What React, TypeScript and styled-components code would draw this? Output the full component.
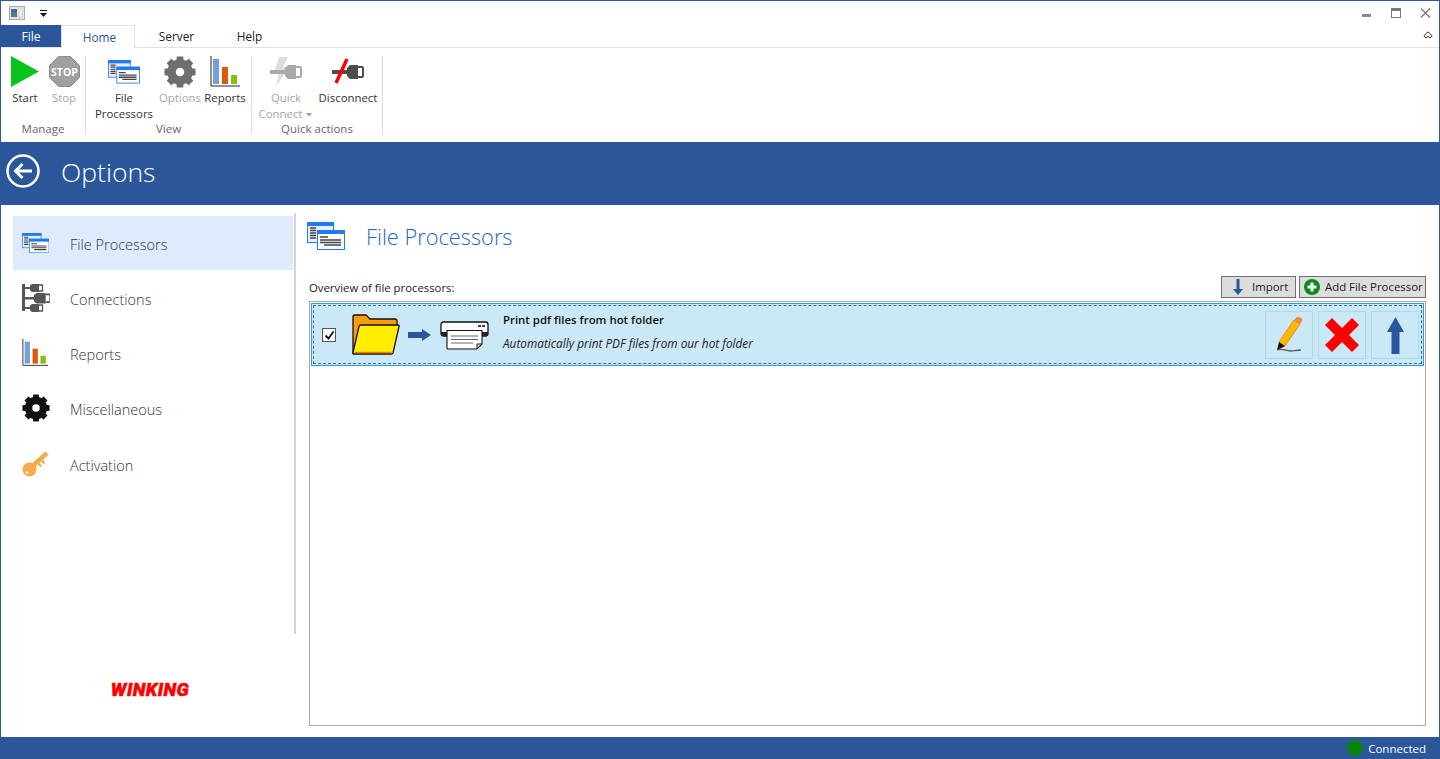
import React from "react";
import styled, { createGlobalStyle } from "styled-components";

const Global = createGlobalStyle`
  html, body { margin: 0; padding: 0; background: #fff; }
  * { box-sizing: border-box; }
  #root { width: 1440px; height: 759px; overflow: hidden; }
`;

const BLUE = "#2b579a";

const Win = styled.div`
  width: 1440px; height: 759px; display: flex; flex-direction: column;
  border: 1px solid ${BLUE}; border-bottom: 0; background: #fff;
  font-family: "Open Sans", "Noto Sans", sans-serif; color: #222; overflow: hidden;
`;
const TitleBar = styled.div`
  height: 24px; display: flex; align-items: center; padding-left: 8px; flex: none;
`;
const AppIcon = styled.div`margin-right: 14px; display: flex;`;
const WinButtons = styled.div`margin-left: auto; display: flex; align-items: center; gap: 19px; padding-right: 8px;`;
const TabRow = styled.div`
  height: 23px; display: flex; align-items: stretch; flex: none; border-bottom: 1px solid #e1e1e1; position: relative;
`;
const FileTab = styled.div`
  width: 60px; background: ${BLUE}; color: #fff; font-size: 12px; display: flex; align-items: center; justify-content: center;
`;
const Tab = styled.div<{ $active?: boolean; $w: number }>`
  width: ${p => p.$w}px; font-size: 11.8px; display: flex; align-items: center; justify-content: center;
  color: ${p => (p.$active ? BLUE : "#222")};
  ${p => p.$active ? `background:#fff;border:1px solid #e1e1e1;border-bottom:0;height:23px;margin-bottom:-1px;padding-left:3px;` : ""}
`;
const Collapse = styled.div`position: absolute; right: 6px; top: 6px; display: flex;`;
const Ribbon = styled.div`height: 94px; display: flex; flex: none; padding-top: 8px;`;
const Group = styled.div<{ $w: number }>`
  width: ${p => p.$w}px; height: 78px; border-right: 1px solid #dcdcdc; display: flex; flex-direction: column; position: relative; flex: none;
`;
const GroupItems = styled.div`display: flex; flex: 1; align-items: flex-start;`;
const GroupLabel = styled.div`
  height: 14px; font-size: 11.5px; line-height: 14px; text-align: center; color: #666; position: absolute; left: 0; right: 0; bottom: -2px;
`;
const Item = styled.div<{ $w: number; $off?: boolean; $ml?: number }>`
  width: ${p => p.$w}px; margin-left: ${p => p.$ml ?? 0}px; display: flex; flex-direction: column; align-items: center; flex: none;
  font-size: 11.4px; line-height: 16px; text-align: center; color: ${p => (p.$off ? "#a6a6a6" : "#333")};
`;
const ItemIcon = styled.div<{ $pt?: number }>`
  height: 33px; padding-top: ${p => p.$pt ?? 0}px; display: flex; align-items: flex-start; justify-content: center; margin-bottom: 1px;
`;
const ItemText = styled.span`white-space: nowrap;`;
const Caret = styled.svg`vertical-align: 1px; margin-left: 4px;`;

const Band = styled.div`
  height: 63px; background: ${BLUE}; display: flex; align-items: center; flex: none; margin: 0 -1px; padding: 0 0 6px 6px; color: #fff;
`;
const BandTitle = styled.div`font-size: 26.5px; font-weight: 300; margin-left: 21px; margin-top: 3px;`;

const Body = styled.div`flex: 1; display: flex; min-height: 0;`;
const Side = styled.div`
  width: 295px; flex: none; display: flex; flex-direction: column; padding: 11px 0 0 12px;
`;
const Nav = styled.div`
  height: 421px; display: flex; flex-direction: column; border-right: 2px solid #d4d4d4; margin-top: -3px; padding-top: 3px; width: 283px; flex: none;
`;
const NavItem = styled.div<{ $sel?: boolean }>`
  width: 280px; height: 54px; margin-bottom: 1px; display: flex; align-items: center; padding-left: 9px; flex: none;
  background: ${p => (p.$sel ? "#deebfd" : "transparent")}; font-size: 14.5px; font-weight: 300; color: #333;
  &:last-child { margin-top: 1px; }
`;
const NavIcon = styled.div`width: 48px; display: flex; justify-content: flex-start; flex: none;`;
const NavLabel = styled.span`margin-top: 2px;`;
const Logo = styled.div`
  margin-top: 46px; align-self: center; margin-right: 8px; color: #f00; font: italic 900 18px/20px Roboto, "Liberation Sans", sans-serif;
  letter-spacing: 0.4px; transform: scaleX(1.03); -webkit-text-stroke: 0.5px #f00;
`;

const Main = styled.div`flex: 1; display: flex; flex-direction: column; padding: 0 13px 11px 13px; min-width: 0;`;
const MainHead = styled.div`height: 61px; display: flex; align-items: center; flex: none; margin-left: -2px; padding-top: 1px;`;
const MainTitle = styled.div`font-size: 21.8px; font-weight: 300; color: #1f66c4; margin-left: 21px;`;
const ToolRow = styled.div`height: 23px; margin-top: 9px; display: flex; align-items: center; flex: none;`;
const Overview = styled.div`font-size: 11.35px; color: #222; margin: 1px auto 0 0; white-space: nowrap;`;
const ToolButton = styled.div<{ $w: number; $ml: number }>`
  width: ${p => p.$w}px; height: 22px; margin-left: ${p => p.$ml}px; background: #dddddd; border: 1px solid #707070; white-space: nowrap;
  display: flex; align-items: center; gap: 5px; font-size: 11.4px; padding-left: 4px; color: #222; flex: none;
`;
const ImportIcon = styled.svg`margin: 0 4px 0 7px; flex: none;`;
const ListBox = styled.div`
  flex: 1; margin-top: 3px; border: 1px solid #ababab; padding: 1px;
`;
const Row = styled.div`
  height: 63px; background: #cbe8f6; border: 1px solid #26a0da; padding: 1px;
`;
const RowInner = styled.div`
  height: 100%; border: 1px dashed #3a6f8a; display: flex; align-items: flex-start; padding-left: 8px;
`;
const Check = styled.div`
  width: 14px; height: 14px; background: #fff; border: 1px solid #555; margin-top: 22px; display: flex; align-items: center; justify-content: center; flex: none;
`;
const RowFlow = styled.div`display: flex; align-items: center; margin-left: 16px; margin-top: 8px; flex: none;`;
const ArrowIcon = styled.svg`margin-left: 8px;`;
const PrinterIcon = styled.svg`margin-left: 9px;`;
const RowText = styled.div`margin-left: 14px; padding-top: 5px; flex: none;`;
const RowName = styled.div`font-size: 11.4px; font-weight: 600; line-height: 17px; color: #111;`;
const RowDesc = styled.div`font-size: 11.8px; font-style: italic; line-height: 17px; margin-top: 7px; color: #222;`;
const RowActions = styled.div`margin-left: auto; display: flex; gap: 5px; padding: 5px 2px 0 0;`;
const ActionBtn = styled.div`
  width: 48px; height: 48px; border: 1px solid #aadbe8; display: flex; align-items: center; justify-content: center;
`;
const Status = styled.div`
  height: 22px; background: ${BLUE}; flex: none; margin: 0 -1px; display: flex; align-items: center; justify-content: flex-end; padding-right: 14px; color: #fff; font-size: 11.5px;
`;
const Dot = styled.div`width: 16px; height: 16px; border-radius: 50%; background: #0a830a; margin-right: 5px;`;

const FileProcIcon = ({ s = 1 }: { s?: number }) => (
  <svg width={38 * s} height={28 * s} viewBox="0 0 38 28">
    <rect x="0.5" y="0.5" width="26" height="20" fill="#e9eefa" stroke="#1e7cf0" />
    <rect x="0" y="0" width="27" height="4" fill="#1e7cf0" />
    <path d="M3 6h6M3 8.500h6M3 11h6M3 13.500h6M3 16h6" stroke="#444" strokeWidth="1.4" />
    <rect x="10.5" y="8.500" width="27" height="19" fill="#fff" stroke="#1e7cf0" />
    <rect x="10" y="8" width="28" height="4" fill="#1e7cf0" />
    <path d="M13 15h8M13 18h21M13 20.500h21M17 23h17" stroke="#444" strokeWidth="1.6" />
  </svg>
);
const BarsIcon = ({ s = 1 }: { s?: number }) => (
  <svg width={30 * s} height={31 * s} viewBox="0 0 30 31">
    <path d="M1 0v30h29" fill="none" stroke="#222" strokeWidth="1" />
    <rect x="3" y="3" width="6" height="25" fill="#74a0dc" />
    <rect x="12" y="11" width="6" height="17" fill="#dd5a0a" />
    <rect x="21" y="19" width="6" height="9" fill="#87bd17" />
  </svg>
);
const Gear = ({ size, color }: { size: number; color: string }) => {
  const teeth = Array.from({ length: 8 }, (_, i) => i * 45);
  return (
    <svg width={size} height={size} viewBox="0 0 32 32">
      {teeth.map(a => <path key={a} d="M12 8L12.800 0.500h6.400L20 8z" fill={color} transform={`rotate(${a} 16 16)`} />)}
      <circle cx="16" cy="16" r="8.500" fill="none" stroke={color} strokeWidth="8.500" />
    </svg>
  );
};
const Plug = ({ color }: { color: string }) => (
  <g>
    <rect x="0" y="14" width="17" height="4" fill={color} />
    <path d="M15 12l3-3h8v14h-8l-3-3z" fill={color} />
    <path d="M26 11h4a1 1 0 0 1 1 1v8a1 1 0 0 1-1 1h-4" fill="none" stroke={color} strokeWidth="2" />
  </g>
);
const MiniPlug = ({ y, x, s }: { y: number; x: number; s: number }) => (
  <g transform={`translate(${x} ${y}) scale(${s})`} fill="#555">
    <path d="M0 1.500L2 0h7v8H2L0 6.500z" />
    <path d="M9 1h3.500v6H9" fill="none" stroke="#555" strokeWidth="1.300" />
  </g>
);
const ConnectionsIcon = () => (
  <svg width="28" height="28" viewBox="0 0 28 28">
    <rect x="0" y="0" width="3" height="27" fill="#555" />
    <rect x="0" y="3" width="9" height="2" fill="#555" />
    <rect x="0" y="13" width="13" height="2.500" fill="#555" />
    <rect x="0" y="23" width="9" height="2" fill="#555" />
    <MiniPlug x={8} y={0} s={1} />
    <MiniPlug x={12} y={9} s={1.300} />
    <MiniPlug x={8} y={20} s={1} />
  </svg>
);

export default function App() {
  return (
    <Win>
      <Global />
      <TitleBar>
        <AppIcon>
          <svg width="16" height="14" viewBox="0 0 16 14">
            <rect x="0.500" y="0.500" width="15" height="13" fill="#e4e4e4" stroke="#aaa" />
            <rect x="2" y="3" width="6" height="8" fill="#4e7f7a" />
            <rect x="2" y="3" width="6" height="3" fill="#3d6aa5" />
            <rect x="10" y="3" width="3" height="8" fill="#f4f4f4" stroke="#bbb" strokeWidth="0.500" />
          </svg>
        </AppIcon>
        <svg width="10" height="9" viewBox="0 0 10 9">
          <rect x="1" y="1" width="7" height="1" fill="#111" />
          <path d="M1 4h7L4.500 8z" fill="#111" />
        </svg>
        <WinButtons>
          <svg width="10" height="10" viewBox="0 0 10 10"><rect x="0" y="6" width="9" height="3" fill="#8a8a8a" /></svg>
          <svg width="10" height="10" viewBox="0 0 10 10"><rect x="0.500" y="0.500" width="9" height="9" fill="none" stroke="#777" /><rect x="0" y="0" width="10" height="3" fill="#777" /></svg>
          <svg width="11" height="10" viewBox="0 0 11 10"><path d="M1 0.500l9 9M10 0.500l-9 9" stroke="#777" strokeWidth="1.300" /></svg>
        </WinButtons>
      </TitleBar>
      <TabRow>
        <FileTab>File</FileTab>
        <Tab $active $w={74}>Home</Tab>
        <Tab $w={83}>Server</Tab>
        <Tab $w={63}>Help</Tab>
        <Collapse>
          <svg width="10" height="8" viewBox="0 0 10 8"><path d="M0.800 4.800L5 0.800l4.200 4L7 7 5 5.300 3 7z" fill="none" stroke="#333" strokeWidth="1" /></svg>
        </Collapse>
      </TabRow>
      <Ribbon>
        <Group $w={85}>
          <GroupItems>
            <Item $w={44} $ml={2}>
              <ItemIcon><svg width="28" height="31" viewBox="0 0 28 31"><path d="M0 0l28 15.500L0 31z" fill="#0ac41e" /></svg></ItemIcon>
              Start
            </Item>
            <Item $w={34} $off>
              <ItemIcon>
                <svg width="31" height="31" viewBox="0 0 31 31">
                  <path d="M9.500 0.500h12l9 9v12l-9 9h-12l-9-9v-12z" fill="#a0a0a0" stroke="#8e8e8e" />
                  <text x="15.500" y="19.500" fontSize="10.500" fontWeight="700" fill="#fff" textAnchor="middle" fontFamily="Open Sans">STOP</text>
                </svg>
              </ItemIcon>
              Stop
            </Item>
          </GroupItems>
          <GroupLabel>Manage</GroupLabel>
        </Group>
        <Group $w={166}>
          <GroupItems>
            <Item $w={62} $ml={7}>
              <ItemIcon $pt={4}><FileProcIcon s={0.84} /></ItemIcon>
              <ItemText>File<br />Processors</ItemText>
            </Item>
            <Item $w={48} $off $ml={1}>
              <ItemIcon><Gear size={32} color="#6e6e6e" /></ItemIcon>
              Options
            </Item>
            <Item $w={42}>
              <ItemIcon><BarsIcon /></ItemIcon>
              Reports
            </Item>
          </GroupItems>
          <GroupLabel>View</GroupLabel>
        </Group>
        <Group $w={131}>
          <GroupItems>
            <Item $w={56} $off $ml={6}>
              <ItemIcon>
                <svg width="32" height="32" viewBox="0 0 32 32">
                  <path d="M9 1h9l-5 10h6L6 31l3-14H4z" fill="#dcdcdc" />
                  <Plug color="#a8a8a8" />
                </svg>
              </ItemIcon>
              <ItemText>Quick<br />Connect<Caret width="7" height="4" viewBox="0 0 7 4"><path d="M0 0h6L3 3.500z" fill="#999" /></Caret></ItemText>
            </Item>
            <Item $w={64} $ml={2}>
              <ItemIcon>
                <svg width="32" height="32" viewBox="0 0 32 32">
                  <Plug color="#4d4d4d" />
                  <path d="M15 3L4 27" stroke="#f00" strokeWidth="3.500" />
                </svg>
              </ItemIcon>
              Disconnect
            </Item>
          </GroupItems>
          <GroupLabel>Quick actions</GroupLabel>
        </Group>
      </Ribbon>
      <Band>
        <svg width="34" height="34" viewBox="0 0 34 34">
          <circle cx="17" cy="17" r="15.500" fill="none" stroke="#fff" strokeWidth="2.500" />
          <path d="M26 17H10M16.500 10l-7 7 7 7" fill="none" stroke="#fff" strokeWidth="3" />
        </svg>
        <BandTitle>Options</BandTitle>
      </Band>
      <Body>
        <Side>
          <Nav>
            <NavItem $sel><NavIcon><FileProcIcon s={0.72} /></NavIcon><NavLabel>File Processors</NavLabel></NavItem>
            <NavItem><NavIcon><ConnectionsIcon /></NavIcon><NavLabel>Connections</NavLabel></NavItem>
            <NavItem><NavIcon><BarsIcon s={0.88} /></NavIcon><NavLabel>Reports</NavLabel></NavItem>
            <NavItem><NavIcon><Gear size={28} color="#111" /></NavIcon><NavLabel>Miscellaneous</NavLabel></NavItem>
            <NavItem>
              <NavIcon>
                <svg width="28" height="28" viewBox="0 0 28 28">
                  <circle cx="7.500" cy="19.500" r="7" fill="#f6ab49" />
                  <path d="M10 16.500L25 3" stroke="#f6ab49" strokeWidth="4.500" fill="none" />
                  <path d="M16 13l3 3.500M19.500 10l3 3.500" stroke="#f6ab49" strokeWidth="2.200" fill="none" />
                  <circle cx="5" cy="22.500" r="1.300" fill="#fff" />
                </svg>
              </NavIcon>
              <NavLabel>Activation</NavLabel>
            </NavItem>
          </Nav>
          <Logo>WINKING</Logo>
        </Side>
        <Main>
          <MainHead>
            <FileProcIcon />
            <MainTitle>File Processors</MainTitle>
          </MainHead>
          <ToolRow>
            <Overview>Overview of file processors:</Overview>
            <ToolButton $w={75} $ml={0}>
              <ImportIcon width="10" height="16" viewBox="0 0 10 16"><path d="M3.500 0h3v10H10l-5 6-5-6h3.500z" fill="#2b579a" /></ImportIcon>
              Import
            </ToolButton>
            <ToolButton $w={127} $ml={3}>
              <svg width="16" height="16" viewBox="0 0 16 16">
                <circle cx="8" cy="8" r="8" fill="#0b8a1c" />
                <path d="M3.500 8h9M8 3.500v9" stroke="#fff" strokeWidth="3" />
              </svg>
              Add File Processor
            </ToolButton>
          </ToolRow>
          <ListBox>
            <Row>
              <RowInner>
                <Check>
                  <svg width="11" height="11" viewBox="0 0 11 11"><path d="M1.500 5.500l3 3 5-7" fill="none" stroke="#111" strokeWidth="1.800" /></svg>
                </Check>
                <RowFlow>
                  <svg width="48" height="42" viewBox="0 0 48 42">
                    <path d="M1 39V3a2 2 0 0 1 2-2h11l4 4h25a2 2 0 0 1 2 2v8H8L2 40z" fill="#fb9a0a" stroke="#111" strokeWidth="1.300" strokeLinejoin="round" />
                    <path d="M2 40a1 1 0 0 1-1-1.500L7 12.500a2 2 0 0 1 2-1.500h37a1 1 0 0 1 1 1.500l-6 26.500a2 2 0 0 1-2 1z" fill="#ffee00" stroke="#111" strokeWidth="1.300" />
                    <path d="M2.500 38.500h37" stroke="#ef7d00" strokeWidth="1.500" />
                  </svg>
                  <ArrowIcon width="23" height="12" viewBox="0 0 23 12">
                    <path d="M0 3h14V0l9 6-9 6V9H0z" fill="#2b579a" />
                  </ArrowIcon>
                  <PrinterIcon width="49" height="29" viewBox="0 0 49 29">
                    <rect x="1" y="1" width="47" height="14" rx="2.500" fill="#fff" stroke="#111" strokeWidth="1.300" />
                    <path d="M1 11h47v2a2 2 0 0 1-2 2H3a2 2 0 0 1-2-2z" fill="#222" />
                    <path d="M38 4h3v2h-3zM42 4h3v2h-3z" fill="#444" />
                    <path d="M7 9.500h35V23l-5 5H8a1 1 0 0 1-1-1z" fill="#fff" stroke="#111" strokeWidth="1.100" />
                    <path d="M37 28v-5h5" fill="none" stroke="#111" strokeWidth="1" />
                    <path d="M11 15h27M11 18.500h27M11 22h22" stroke="#666" strokeWidth="1" />
                  </PrinterIcon>
                </RowFlow>
                <RowText>
                  <RowName>Print pdf files from hot folder</RowName>
                  <RowDesc>Automatically print PDF files from our hot folder</RowDesc>
                </RowText>
                <RowActions>
                  <ActionBtn>
                    <svg width="30" height="36" viewBox="0 0 30 36">
                      <path d="M5 25L20 3l6 4L11 29l-5 2z" fill="#fdb900" stroke="#e07a1a" strokeWidth="0.800" />
                      <path d="M20 3l6 4 2-3a2 2 0 0 0-1-3l-2-1a2 2 0 0 0-3 1z" fill="#f08a30" />
                      <path d="M5 25l6 4-8 4z" fill="#111" />
                      <path d="M3 33c6-2 9 1 13 1 3 0 7-1 11-1" fill="none" stroke="#555" strokeWidth="1.300" />
                    </svg>
                  </ActionBtn>
                  <ActionBtn>
                    <svg width="34" height="34" viewBox="0 0 34 34"><path d="M7 0L17 10 27 0l7 7-10 10 10 10-7 7-10-10L7 34l-7-7 10-10L0 7z" fill="#f00" /></svg>
                  </ActionBtn>
                  <ActionBtn>
                    <svg width="17" height="37" viewBox="0 0 17 37"><path d="M8.500 0L17 15h-4.500v22h-8V15H0z" fill="#2b579a" /></svg>
                  </ActionBtn>
                </RowActions>
              </RowInner>
            </Row>
          </ListBox>
        </Main>
      </Body>
      <Status><Dot />Connected</Status>
    </Win>
  );
}
